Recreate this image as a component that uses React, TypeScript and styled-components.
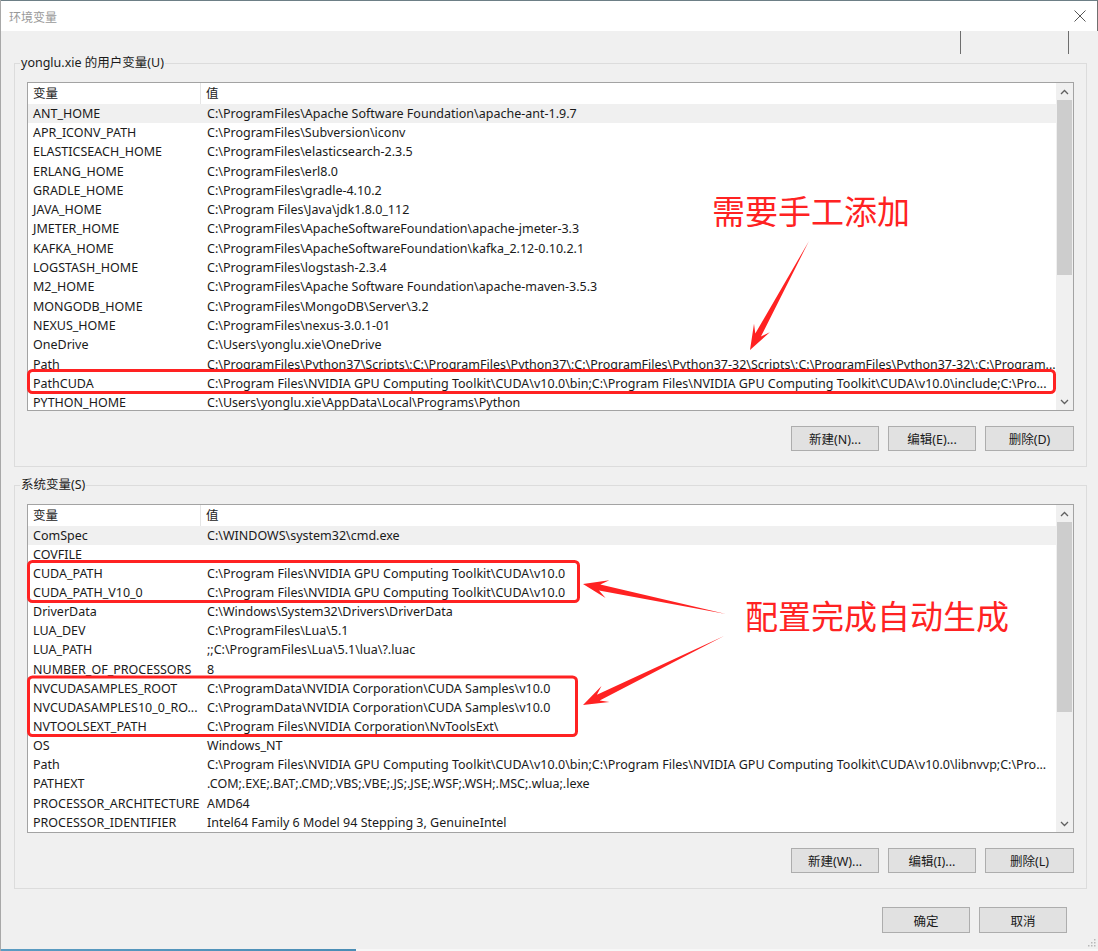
import styled, { createGlobalStyle } from "styled-components";

const GlobalStyle = createGlobalStyle`
  html, body {
    margin: 0;
    padding: 0;
    background: #f0f0f0;
  }
  body {
    font-family: "Noto Sans", "Noto Sans CJK SC", sans-serif;
    color: #1a1a1a;
  }
`;

type EnvVar = [string, string];

const userVars: EnvVar[] = [
  ["ANT_HOME", "C:\\ProgramFiles\\Apache Software Foundation\\apache-ant-1.9.7"],
  ["APR_ICONV_PATH", "C:\\ProgramFiles\\Subversion\\iconv"],
  ["ELASTICSEACH_HOME", "C:\\ProgramFiles\\elasticsearch-2.3.5"],
  ["ERLANG_HOME", "C:\\ProgramFiles\\erl8.0"],
  ["GRADLE_HOME", "C:\\ProgramFiles\\gradle-4.10.2"],
  ["JAVA_HOME", "C:\\Program Files\\Java\\jdk1.8.0_112"],
  ["JMETER_HOME", "C:\\ProgramFiles\\ApacheSoftwareFoundation\\apache-jmeter-3.3"],
  ["KAFKA_HOME", "C:\\ProgramFiles\\ApacheSoftwareFoundation\\kafka_2.12-0.10.2.1"],
  ["LOGSTASH_HOME", "C:\\ProgramFiles\\logstash-2.3.4"],
  ["M2_HOME", "C:\\ProgramFiles\\Apache Software Foundation\\apache-maven-3.5.3"],
  ["MONGODB_HOME", "C:\\ProgramFiles\\MongoDB\\Server\\3.2"],
  ["NEXUS_HOME", "C:\\ProgramFiles\\nexus-3.0.1-01"],
  ["OneDrive", "C:\\Users\\yonglu.xie\\OneDrive"],
  [
    "Path",
    "C:\\ProgramFiles\\Python37\\Scripts\\;C:\\ProgramFiles\\Python37\\;C:\\ProgramFiles\\Python37-32\\Scripts\\;C:\\ProgramFiles\\Python37-32\\;C:\\Program...",
  ],
  [
    "PathCUDA",
    "C:\\Program Files\\NVIDIA GPU Computing Toolkit\\CUDA\\v10.0\\bin;C:\\Program Files\\NVIDIA GPU Computing Toolkit\\CUDA\\v10.0\\include;C:\\Pro...",
  ],
  ["PYTHON_HOME", "C:\\Users\\yonglu.xie\\AppData\\Local\\Programs\\Python"],
];

const cudaPath = "C:\\Program Files\\NVIDIA GPU Computing Toolkit\\CUDA\\v10.0";
const samplesPath = "C:\\ProgramData\\NVIDIA Corporation\\CUDA Samples\\v10.0";

const systemVars: EnvVar[] = [
  ["ComSpec", "C:\\WINDOWS\\system32\\cmd.exe"],
  ["COVFILE", ""],
  ["CUDA_PATH", cudaPath],
  ["CUDA_PATH_V10_0", cudaPath],
  ["DriverData", "C:\\Windows\\System32\\Drivers\\DriverData"],
  ["LUA_DEV", "C:\\ProgramFiles\\Lua\\5.1"],
  ["LUA_PATH", ";;C:\\ProgramFiles\\Lua\\5.1\\lua\\?.luac"],
  ["NUMBER_OF_PROCESSORS", "8"],
  ["NVCUDASAMPLES_ROOT", samplesPath],
  ["NVCUDASAMPLES10_0_RO...", samplesPath],
  ["NVTOOLSEXT_PATH", "C:\\Program Files\\NVIDIA Corporation\\NvToolsExt\\"],
  ["OS", "Windows_NT"],
  [
    "Path",
    "C:\\Program Files\\NVIDIA GPU Computing Toolkit\\CUDA\\v10.0\\bin;C:\\Program Files\\NVIDIA GPU Computing Toolkit\\CUDA\\v10.0\\libnvvp;C:\\Pro...",
  ],
  ["PATHEXT", ".COM;.EXE;.BAT;.CMD;.VBS;.VBE;.JS;.JSE;.WSF;.WSH;.MSC;.wlua;.lexe"],
  ["PROCESSOR_ARCHITECTURE", "AMD64"],
  ["PROCESSOR_IDENTIFIER", "Intel64 Family 6 Model 94 Stepping 3, GenuineIntel"],
];

// tapered annotation arrow, from a thin tail to a barbed head
function arrowPoints(tx: number, ty: number, px: number, py: number) {
  const dx = px - tx;
  const dy = py - ty;
  const len = Math.hypot(dx, dy);
  const ux = dx / len;
  const uy = dy / len;
  const nx = -uy;
  const ny = ux;
  const pt = (back: number, side: number) =>
    `${(px - ux * back + nx * side).toFixed(1)},${(py - uy * back + ny * side).toFixed(1)}`;
  return [
    `${tx},${ty}`,
    pt(17, 3.2),
    pt(25, 9),
    `${px},${py}`,
    pt(25, -9),
    pt(17, -3.2),
  ].join(" ");
}

function Chevron({ up }: { up?: boolean }) {
  return (
    <svg width="9" height="6" viewBox="0 0 9 6">
      <path
        d={up ? "M1 5 L4.5 1.5 L8 5" : "M1 1 L4.5 4.5 L8 1"}
        fill="none"
        stroke="#606060"
        strokeWidth="1.3"
      />
    </svg>
  );
}

function VarList({ rows, thumb, rowHeight }: { rows: EnvVar[]; thumb: number; rowHeight: number }) {
  return (
    <ListView>
      <Table>
        <HeaderRow>
          <HeaderCell $divider>变量</HeaderCell>
          <HeaderCell>值</HeaderCell>
        </HeaderRow>
        {rows.map(([name, value], i) => (
          <Row key={name + i} $shaded={i === 0} $height={rowHeight}>
            <NameCell>{name}</NameCell>
            <ValueCell>{value}</ValueCell>
          </Row>
        ))}
      </Table>
      <ScrollBar>
        <ScrollArrow>
          <Chevron up />
        </ScrollArrow>
        <Track>
          <Thumb $size={thumb} />
        </Track>
        <ScrollArrow>
          <Chevron />
        </ScrollArrow>
      </ScrollBar>
    </ListView>
  );
}

export default function App() {
  return (
    <>
      <GlobalStyle />
      <Window>
        <TitleBar>
          <Title>环境变量</Title>
          <CloseIcon width="12" height="12" viewBox="0 0 12 12">
            <path d="M0.5 0.5 L11.5 11.5 M11.5 0.5 L0.5 11.5" stroke="#555" strokeWidth="1" />
          </CloseIcon>
        </TitleBar>
        <Body>
          <TopStrip>
            <Tick $offset={946} />
            <Tick $offset={107} />
          </TopStrip>

          <Group $top={0}>
            <Legend>yonglu.xie 的用户变量(U)</Legend>
            <VarList rows={userVars} thumb={175} rowHeight={19.3} />
            <ButtonRow>
              <Button>新建(N)...</Button>
              <Button>编辑(E)...</Button>
              <Button $wide>删除(D)</Button>
            </ButtonRow>
          </Group>

          <Group $top={18}>
            <Legend>系统变量(S)</Legend>
            <VarList rows={systemVars} thumb={190} rowHeight={19.15} />
            <ButtonRow>
              <Button>新建(W)...</Button>
              <Button>编辑(I)...</Button>
              <Button $wide>删除(L)</Button>
            </ButtonRow>
          </Group>

          <Footer>
            <Button $tall>确定</Button>
            <Button $tall>取消</Button>
          </Footer>
        </Body>
        <Grip width="9" height="9" viewBox="0 0 9 9">
          {[
            [7, 1],
            [7, 4],
            [4, 4],
            [7, 7],
            [4, 7],
            [1, 7],
          ].map(([x, y]) => (
            <rect key={`${x}-${y}`} x={x} y={y} width="1.5" height="1.5" fill="#b8b8b8" />
          ))}
        </Grip>
        <DesktopStrip />

        <Annotations viewBox="0 0 1098 951">
          <rect x="27.5" y="370.5" width="1026" height="22" rx="4" fill="none" stroke="#ff2222" strokeWidth="3" />
          <rect x="27.5" y="561.5" width="550" height="40" rx="4" fill="none" stroke="#ff2222" strokeWidth="3" />
          <rect x="27.5" y="677" width="548" height="58.5" rx="4" fill="none" stroke="#ff2222" strokeWidth="3" />
          <polygon points={arrowPoints(808, 241, 749, 350)} fill="#ff2222" />
          <polygon points={arrowPoints(725, 614, 582, 584)} fill="#ff2222" />
          <polygon points={arrowPoints(723, 636, 582, 705)} fill="#ff2222" />
        </Annotations>
        <Note $x={711} $y={194}>需要手工添加</Note>
        <Note $x={744} $y={599}>配置完成自动生成</Note>
      </Window>
    </>
  );
}

const Window = styled.div`
  position: relative;
  width: 1098px;
  height: 951px;
  display: flex;
  flex-direction: column;
  background: #f0f0f0;
  overflow: hidden;
  box-sizing: border-box;
  border-left: 1px solid #a8a8a8;
  font-size: 12.5px;
`;

const TitleBar = styled.div`
  height: 31px;
  flex: none;
  box-sizing: border-box;
  display: flex;
  align-items: center;
  justify-content: space-between;
  padding: 0 11px 0 8px;
  background: #ffffff;
  border-top: 1px solid #6d7f86;
  border-right: 1px solid #707070;
`;

const Title = styled.span`
  font-family: "Noto Sans CJK SC", sans-serif;
  font-size: 12px;
  color: #999999;
`;

const CloseIcon = styled.svg`
  display: block;
`;

const Body = styled.div`
  flex: 1;
  display: flex;
  flex-direction: column;
  padding: 0 11px 0 13px;
`;

const TopStrip = styled.div`
  height: 32px;
  display: flex;
`;

const Tick = styled.div<{ $offset: number }>`
  width: 1px;
  height: 23px;
  margin-left: ${(p) => p.$offset}px;
  background: #6e6e6e;
`;

const Group = styled.section<{ $top: number }>`
  margin-top: ${(p) => p.$top}px;
  display: flex;
  flex-direction: column;
  border: 1px solid #dcdcdc;
  padding: 0 12px 15px;
`;

const Legend = styled.div`
  align-self: flex-start;
  margin: -9px 0 0 -7px;
  padding: 0 1px;
  height: 16px;
  line-height: 16px;
  background: #f0f0f0;
  color: #1a1a1a;
`;

const ListView = styled.div`
  margin-top: 11px;
  height: 329px;
  box-sizing: border-box;
  display: flex;
  border: 1px solid #a3a3a3;
  background: #ffffff;
`;

const Table = styled.div`
  flex: 1;
  min-width: 0;
  overflow: hidden;
`;

const HeaderRow = styled.div`
  height: 20.5px;
  display: grid;
  grid-template-columns: 173px 1fr;
  align-items: stretch;
`;

const HeaderCell = styled.div<{ $divider?: boolean }>`
  display: flex;
  align-items: center;
  padding: 0 0 2px 5px;
  color: #222;
  border-right: ${(p) => (p.$divider ? "1px solid #e5e5e5" : "none")};
`;

const Row = styled.div<{ $shaded?: boolean; $height: number }>`
  height: ${(p) => p.$height}px;
  display: grid;
  grid-template-columns: 173px 1fr;
  align-items: center;
  background: ${(p) => (p.$shaded ? "#f0f0f0" : "transparent")};
  white-space: nowrap;
`;

const NameCell = styled.div`
  padding-left: 5px;
  overflow: hidden;
`;

const ValueCell = styled.div`
  padding-left: 6px;
  overflow: hidden;
`;

const ScrollBar = styled.div`
  width: 17px;
  flex: none;
  display: flex;
  flex-direction: column;
  background: #f0f0f0;
`;

const ScrollArrow = styled.div`
  height: 17px;
  display: flex;
  align-items: center;
  justify-content: center;
`;

const Track = styled.div`
  flex: 1;
  padding: 0 1px;
`;

const Thumb = styled.div<{ $size: number }>`
  height: ${(p) => p.$size}px;
  background: #cdcdcd;
`;

const ButtonRow = styled.div`
  margin-top: 15px;
  display: flex;
  justify-content: flex-end;
  gap: 9px;
`;

const Button = styled.button<{ $wide?: boolean; $tall?: boolean }>`
  width: ${(p) => (p.$wide ? 89 : 88)}px;
  height: ${(p) => (p.$tall ? 26 : 25)}px;
  padding: 0;
  border: 1px solid #adadad;
  background: #e1e1e1;
  font-family: "Noto Sans", "Noto Sans CJK SC", sans-serif;
  font-size: 12.5px;
  color: #1a1a1a;
`;

const Footer = styled.div`
  margin-top: 18px;
  padding-right: 20px;
  display: flex;
  justify-content: flex-end;
  gap: 9px;
`;

const Grip = styled.svg`
  position: absolute;
  right: 2px;
  bottom: 4px;
`;

const DesktopStrip = styled.div`
  height: 2px;
  flex: none;
  background: linear-gradient(to right, #5b9cc2 0, #4a8db5 355px, #f7f7f7 355px, #f7f7f7 100%);
`;

const Annotations = styled.svg`
  position: absolute;
  left: 0;
  top: 0;
  width: 1098px;
  height: 951px;
  pointer-events: none;
`;

const Note = styled.div<{ $x: number; $y: number }>`
  position: absolute;
  left: ${(p) => p.$x}px;
  top: ${(p) => p.$y}px;
  font-family: "Noto Sans CJK SC", sans-serif;
  font-size: 33px;
  line-height: 33px;
  color: #ff2222;
  white-space: nowrap;
  pointer-events: none;
`;
